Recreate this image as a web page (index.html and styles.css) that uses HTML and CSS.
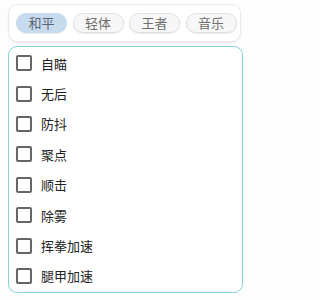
FILE: index.html
```html
<!DOCTYPE html>
<html lang="zh">
<head>
<meta charset="utf-8">
<link rel="stylesheet" href="styles.css">
</head>
<body>
<div class="tabs">
  <span class="pill active">和平</span>
  <span class="pill">轻体</span>
  <span class="pill">王者</span>
  <span class="pill">音乐</span>
</div>
<div class="list">
  <label class="row"><span class="box"></span><span class="txt">自瞄</span></label>
  <label class="row"><span class="box"></span><span class="txt">无后</span></label>
  <label class="row"><span class="box"></span><span class="txt">防抖</span></label>
  <label class="row"><span class="box"></span><span class="txt">聚点</span></label>
  <label class="row"><span class="box"></span><span class="txt">顺击</span></label>
  <label class="row"><span class="box"></span><span class="txt">除雾</span></label>
  <label class="row"><span class="box"></span><span class="txt">挥拳加速</span></label>
  <label class="row"><span class="box"></span><span class="txt">腿甲加速</span></label>
</div>
</body>
</html>
```
FILE: styles.css
```css
html, body {
  margin: 0;
  padding: 0;
  background: #fdfdfd;
}
body {
  font-family: "Noto Sans CJK SC", "Noto Sans", sans-serif;
  width: 249px;
  height: 300px;
  overflow: hidden;
}
.tabs {
  box-sizing: border-box;
  margin: 4px 0 0 8px;
  width: 233px;
  height: 38px;
  border: 1px solid #eaeaea;
  border-radius: 9px;
  background: #fff;
  box-shadow: 0 1px 2px rgba(0,0,0,0.07);
  display: flex;
  align-items: center;
  gap: 5.5px;
  padding: 0 0 0 7px;
}
.pill {
  box-sizing: border-box;
  width: 51px;
  height: 20px;
  border-radius: 10px;
  border: 1px solid #e0e0e0;
  background: #f7f7f7;
  box-shadow: 0 1px 1px rgba(0,0,0,0.08);
  color: #6e6e6e;
  font-size: 13px;
  line-height: 18px;
  text-align: center;
}
.pill.active {
  background: #c7dbee;
  border-color: #c7dbee;
  color: #5c6470;
}
.list {
  box-sizing: border-box;
  margin: 4px 0 0 8px;
  width: 235px;
  height: 247px;
  border: 1.5px solid #85d2dd;
  border-radius: 9px;
  background: #fff;
  padding: 1px 0 0 7px;
  display: flex;
  flex-direction: column;
}
.row {
  height: 30.4px;
  display: flex;
  align-items: center;
}
.box {
  box-sizing: border-box;
  width: 16px;
  height: 16px;
  border: 2px solid #666;
  border-radius: 2px;
  flex: none;
}
.txt {
  margin-left: 9px;
  font-size: 13px;
  color: #222;
}
```
